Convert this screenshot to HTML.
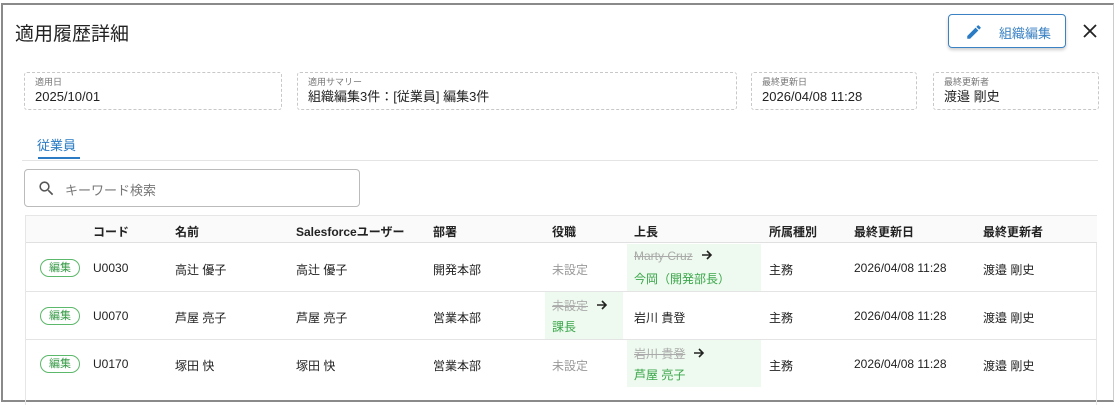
<!DOCTYPE html>
<html><head><meta charset="utf-8"><style>
*{box-sizing:border-box;margin:0;padding:0}
body{width:1118px;height:404px;background:#fff;font-family:"Liberation Sans","Noto Sans CJK JP",sans-serif;color:#222;position:relative;overflow:hidden}
.frame{position:absolute;left:1px;top:3px;width:1113px;height:399px;border:2px solid #8a8a8a;border-right:1px solid #ccc}
.abs{position:absolute}
.title{left:15px;top:19px;font-size:19px;color:#222}
.btn{left:948px;top:14px;width:118px;height:34px;border:1px solid #3b82c4;border-radius:4px;box-shadow:0 2px 3px rgba(0,0,0,.2);color:#3b82c4;font-size:13px}
.close{left:1083px;top:24px}
.box{top:72px;height:38px;border:1px dashed #c8c8c8;border-radius:3px;padding:4px 10px}
.box .l{font-size:9px;color:#777;line-height:11px}
.box .v{font-size:13px;color:#222;line-height:17px}
.tab{left:37px;top:135px;font-size:13px;color:#2a7bc4}
.tabline{left:38px;top:157px;width:42px;height:2px;background:#2a7bc4}
.sep{left:22px;top:160px;width:1076px;height:1px;background:#e4e4e4}
.search{left:24px;top:169px;width:336px;height:38px;border:1px solid #bbb;border-radius:4px}
.search span{position:absolute;left:40px;top:10px;font-size:13px;color:#777}
.tbl{left:25px;top:215px;width:1072px;height:190px;border:1px solid #e6e6e6;border-bottom:none}
.hdr{left:0;top:0;width:1071px;height:27px;background:#fafafa;border-bottom:1px solid #e0e0e0}
.t{position:absolute;font-size:12px;white-space:nowrap}
.h{font-weight:bold;top:7px}
.rl{position:absolute;left:0;width:1071px;height:1px;background:#e4e4e4}
.badge{position:absolute;left:14px;width:40px;height:18px;border:1px solid #5cb86a;border-radius:9px;color:#3a9c4a;font-size:11px;text-align:center;line-height:16px}
.hl{position:absolute;background:#eefaef}
.old{color:#aaa;text-decoration:line-through}
.new{color:#3aa64a}
.gray{color:#999}
.ar{display:inline-block;vertical-align:-1px;margin-left:8px}
</style></head><body>
<div class="frame"></div>
<div class="abs title">適用履歴詳細</div>
<div class="abs btn"><svg style="position:absolute;left:16px;top:8px" width="18" height="18" viewBox="0 0 24 24"><path fill="#2a7bc4" d="M3 17.25V21h3.75L17.81 9.94l-3.75-3.75L3 17.25zM20.71 7.04a1 1 0 0 0 0-1.41l-2.34-2.34a1 1 0 0 0-1.41 0l-1.83 1.83 3.75 3.75 1.83-1.83z"/></svg><span style="position:absolute;left:50px;top:8px">組織編集</span></div>
<svg class="abs close" width="14" height="14" viewBox="0 0 14 14"><path d="M1 1L13 13M13 1L1 13" stroke="#222" stroke-width="1.8"/></svg>
<div class="abs box" style="left:24px;width:258px"><div class="l">適用日</div><div class="v">2025/10/01</div></div>
<div class="abs box" style="left:297px;width:440px"><div class="l">適用サマリー</div><div class="v">組織編集3件：[従業員] 編集3件</div></div>
<div class="abs box" style="left:751px;width:166px"><div class="l">最終更新日</div><div class="v">2026/04/08 11:28</div></div>
<div class="abs box" style="left:933px;width:166px"><div class="l">最終更新者</div><div class="v">渡邉 剛史</div></div>
<div class="abs tab">従業員</div><div class="abs tabline"></div><div class="abs sep"></div>
<div class="abs search"><svg style="position:absolute;left:12px;top:9px" width="19" height="19" viewBox="0 0 24 24"><path fill="#555" d="M15.5 14h-.79l-.28-.27A6.47 6.47 0 0 0 16 9.5 6.5 6.5 0 1 0 9.5 16c1.61 0 3.09-.59 4.23-1.57l.27.28v.79l5 4.99L20.49 19l-4.99-5zm-6 0C7.01 14 5 11.99 5 9.5S7.01 5 9.5 5 14 7.01 14 9.5 11.99 14 9.5 14z"/></svg><span>キーワード検索</span></div>
<div class="abs tbl">
<div class="abs hdr"></div>
<div class="t h" style="left:67px">コード</div><div class="t h" style="left:149px">名前</div><div class="t h" style="left:270px">Salesforceユーザー</div><div class="t h" style="left:407px">部署</div><div class="t h" style="left:526px">役職</div><div class="t h" style="left:608px">上長</div><div class="t h" style="left:743px">所属種別</div><div class="t h" style="left:828px">最終更新日</div><div class="t h" style="left:957px">最終更新者</div>
<div class="hl" style="left:601px;top:28px;width:134px;height:47px"></div>
<div class="hl" style="left:519px;top:76px;width:78px;height:47px"></div>
<div class="hl" style="left:601px;top:124px;width:134px;height:47px"></div>
<div class="rl" style="top:75px"></div><div class="rl" style="top:123px"></div>
<!-- row1 -->
<div class="badge" style="top:43px">編集</div>
<div class="t" style="left:67px;top:45px">U0030</div><div class="t" style="left:149px;top:45px">高辻 優子</div><div class="t" style="left:270px;top:45px">高辻 優子</div><div class="t" style="left:407px;top:45px">開発本部</div><div class="t gray" style="left:526px;top:45px">未設定</div>
<div class="t" style="left:608px;top:33px"><span class="old">Marty Cruz</span><svg class="ar" width="12" height="12" viewBox="0 0 12 12"><path d="M1 6H10M6 2L10 6L6 10" stroke="#222" stroke-width="1.6" fill="none"/></svg></div><div class="t new" style="left:608px;top:54px">今岡（開発部長）</div>
<div class="t" style="left:743px;top:45px">主務</div><div class="t" style="left:828px;top:45px">2026/04/08 11:28</div><div class="t" style="left:957px;top:45px">渡邉 剛史</div>
<!-- row2 -->
<div class="badge" style="top:91px">編集</div>
<div class="t" style="left:67px;top:93px">U0070</div><div class="t" style="left:149px;top:93px">芦屋 亮子</div><div class="t" style="left:270px;top:93px">芦屋 亮子</div><div class="t" style="left:407px;top:93px">営業本部</div>
<div class="t" style="left:526px;top:81px"><span class="old">未設定</span><svg class="ar" width="12" height="12" viewBox="0 0 12 12"><path d="M1 6H10M6 2L10 6L6 10" stroke="#222" stroke-width="1.6" fill="none"/></svg></div><div class="t new" style="left:526px;top:102px">課長</div>
<div class="t" style="left:608px;top:93px">岩川 貴登</div>
<div class="t" style="left:743px;top:93px">主務</div><div class="t" style="left:828px;top:93px">2026/04/08 11:28</div><div class="t" style="left:957px;top:93px">渡邉 剛史</div>
<!-- row3 -->
<div class="badge" style="top:139px">編集</div>
<div class="t" style="left:67px;top:141px">U0170</div><div class="t" style="left:149px;top:141px">塚田 快</div><div class="t" style="left:270px;top:141px">塚田 快</div><div class="t" style="left:407px;top:141px">営業本部</div><div class="t gray" style="left:526px;top:141px">未設定</div>
<div class="t" style="left:608px;top:129px"><span class="old">岩川 貴登</span><svg class="ar" width="12" height="12" viewBox="0 0 12 12"><path d="M1 6H10M6 2L10 6L6 10" stroke="#222" stroke-width="1.6" fill="none"/></svg></div><div class="t new" style="left:608px;top:150px">芦屋 亮子</div>
<div class="t" style="left:743px;top:141px">主務</div><div class="t" style="left:828px;top:141px">2026/04/08 11:28</div><div class="t" style="left:957px;top:141px">渡邉 剛史</div>
</div>
</body></html>
